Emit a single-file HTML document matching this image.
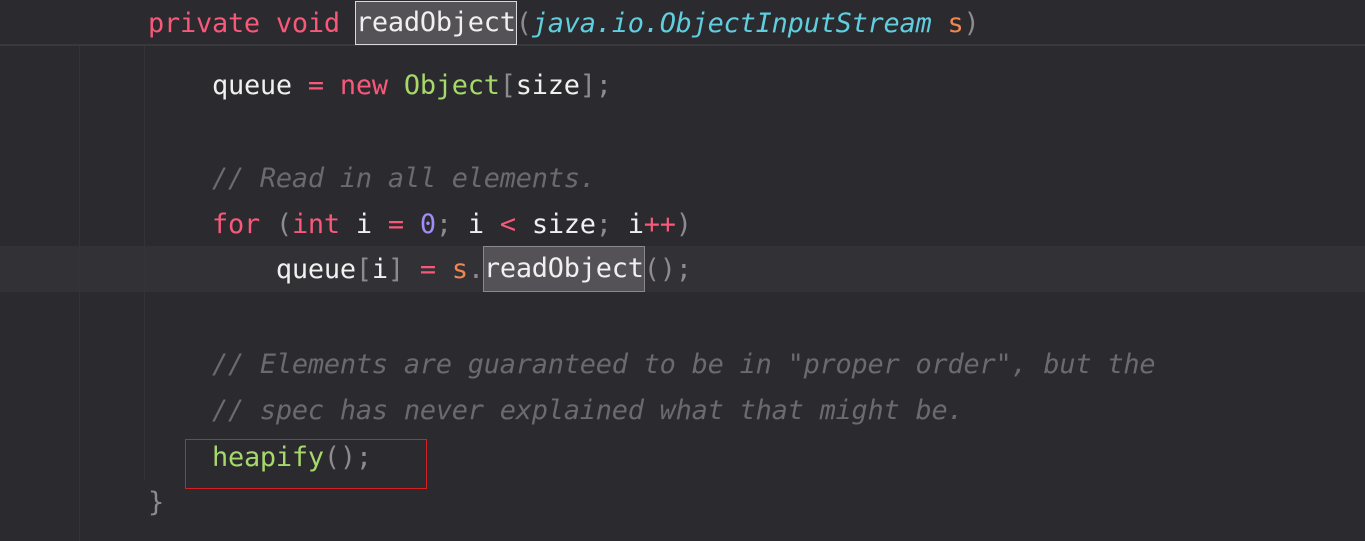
<!DOCTYPE html>
<html><head><meta charset="utf-8"><style>
html,body{margin:0;padding:0;background:#2b2a2e;width:1365px;height:541px;overflow:hidden}
.l{position:absolute;left:148px;font-family:"DejaVu Sans Mono","Liberation Mono",monospace;font-size:26.9px;letter-spacing:-0.2px;white-space:pre;line-height:46px;height:46px;color:#eeeeee}
.k{color:#f9587a}.w{color:#f0f0f0}.g{color:#a6d96a}.p{color:#8d8b90}.c{color:#5fcfdf;font-style:italic}
.o{color:#f2874f}.cm{color:#6b6a6e;font-style:italic}.n{color:#a38cf5}
.hl{background:#545256;outline:1px solid #8a888c;display:inline-block;line-height:44px;height:44px;vertical-align:top;margin-top:0px}
.hl1{background:#545256;outline:1.5px solid #d8d8d8;display:inline-block;line-height:42px;height:42px;vertical-align:top;margin-top:1px}
</style></head><body>
<div style="position:absolute;left:0;top:44px;width:1365px;height:2px;background:#39383c"></div>
<div style="position:absolute;left:0;top:246px;width:1365px;height:46px;background:#323135"></div>
<div style="position:absolute;left:79px;top:46px;width:1px;height:495px;background:#343337"></div>
<div style="position:absolute;left:144px;top:46px;width:1px;height:434px;background:#343337"></div>
<div style="position:absolute;left:185px;top:439px;width:240px;height:48px;border:1px solid #d42020"></div>

<div class="l" style="top:1px"><span class="k">private void </span><span class="hl1 w">readObject</span><span class="p">(</span><span class="c">java.io.ObjectInputStream </span><span class="o">s</span><span class="p">)</span></div>
<div class="l" style="top:63px">    <span class="w">queue </span><span class="k">= new </span><span class="g">Object</span><span class="p">[</span><span class="w">size</span><span class="p">];</span></div>
<div class="l" style="top:156px">    <span class="cm">// Read in all elements.</span></div>
<div class="l" style="top:202px">    <span class="k">for </span><span class="p">(</span><span class="k">int </span><span class="w">i </span><span class="k">= </span><span class="n">0</span><span class="p">; </span><span class="w">i </span><span class="k">&lt; </span><span class="w">size</span><span class="p">; </span><span class="w">i</span><span class="k">++</span><span class="p">)</span></div>
<div class="l" style="top:247px">        <span class="w">queue</span><span class="p">[</span><span class="w">i</span><span class="p">] </span><span class="k">= </span><span class="o">s</span><span class="p">.</span><span class="hl w">readObject</span><span class="p">();</span></div>
<div class="l" style="top:342px">    <span class="cm">// Elements are guaranteed to be in "proper order", but the</span></div>
<div class="l" style="top:388px">    <span class="cm">// spec has never explained what that might be.</span></div>
<div class="l" style="top:435px">    <span class="g">heapify</span><span class="p">();</span></div>
<div class="l" style="top:480px"><span class="p">}</span></div>
</body></html>
